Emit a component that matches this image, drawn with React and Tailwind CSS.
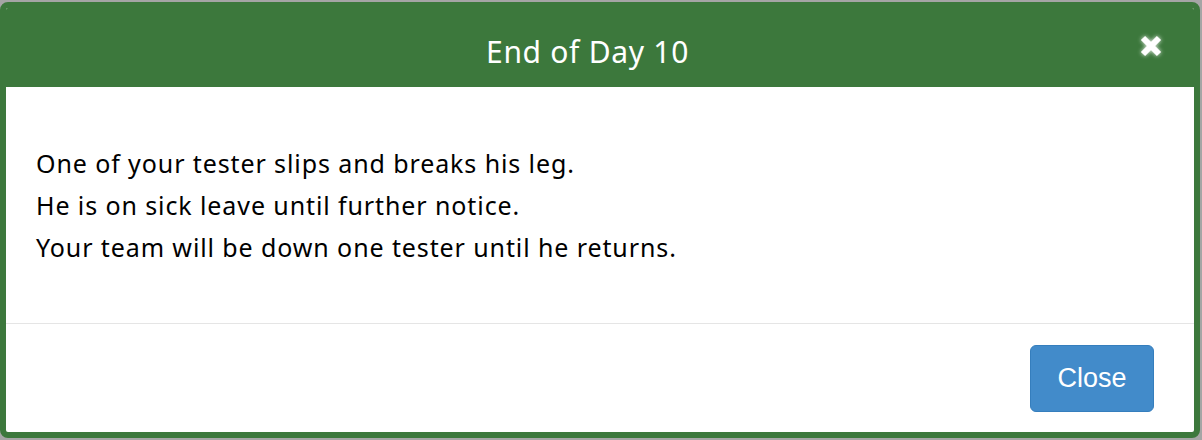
export default function App() {
  return (
    <div className="w-[1202px] h-[440px] bg-[#a5a5a5] pt-[2px] pr-[2px] pb-[2px] overflow-hidden">
      <div className="w-[1200px] h-[436px] border-[6px] border-[#3c783c] rounded-[8px] bg-white flex flex-col overflow-hidden">
        <div className="h-[79px] shrink-0 bg-[#3c783c] flex items-center pr-[31px] pt-[9px]">
          <h1 className="flex-1 text-center text-white text-[30px] tracking-[0.7px] leading-none font-['Noto_Sans',sans-serif] pl-[30px]">
            End of Day 10
          </h1>
          <button className="w-[24px] h-[24px] flex items-center justify-center -mt-[13px]">
            <svg width="22" height="22" viewBox="0 0 22 22" className="drop-shadow-[0_0_2px_rgba(255,255,255,0.9)]">
              <path d="M3 3 L19 19 M19 3 L3 19" stroke="#fff" strokeWidth="6" strokeLinecap="butt" />
            </svg>
          </button>
        </div>
        <div className="h-[236px] shrink-0 pl-[30px] pt-[55px] text-[25px] tracking-[0.9px] leading-[42px] text-black font-['Noto_Sans',sans-serif]">
          <div>One of your tester slips and breaks his leg.</div>
          <div>He is on sick leave until further notice.</div>
          <div>Your team will be down one tester until he returns.</div>
        </div>
        <div className="border-t border-[#e5e5e5] flex-1 flex items-start justify-end pt-[21px] pr-[40px]">
          <button className="w-[124px] h-[67px] bg-[#428bca] border border-[#357ebd] rounded-[6px] text-white text-[27px] font-['Liberation_Sans',sans-serif]">
            Close
          </button>
        </div>
      </div>
    </div>
  );
}
